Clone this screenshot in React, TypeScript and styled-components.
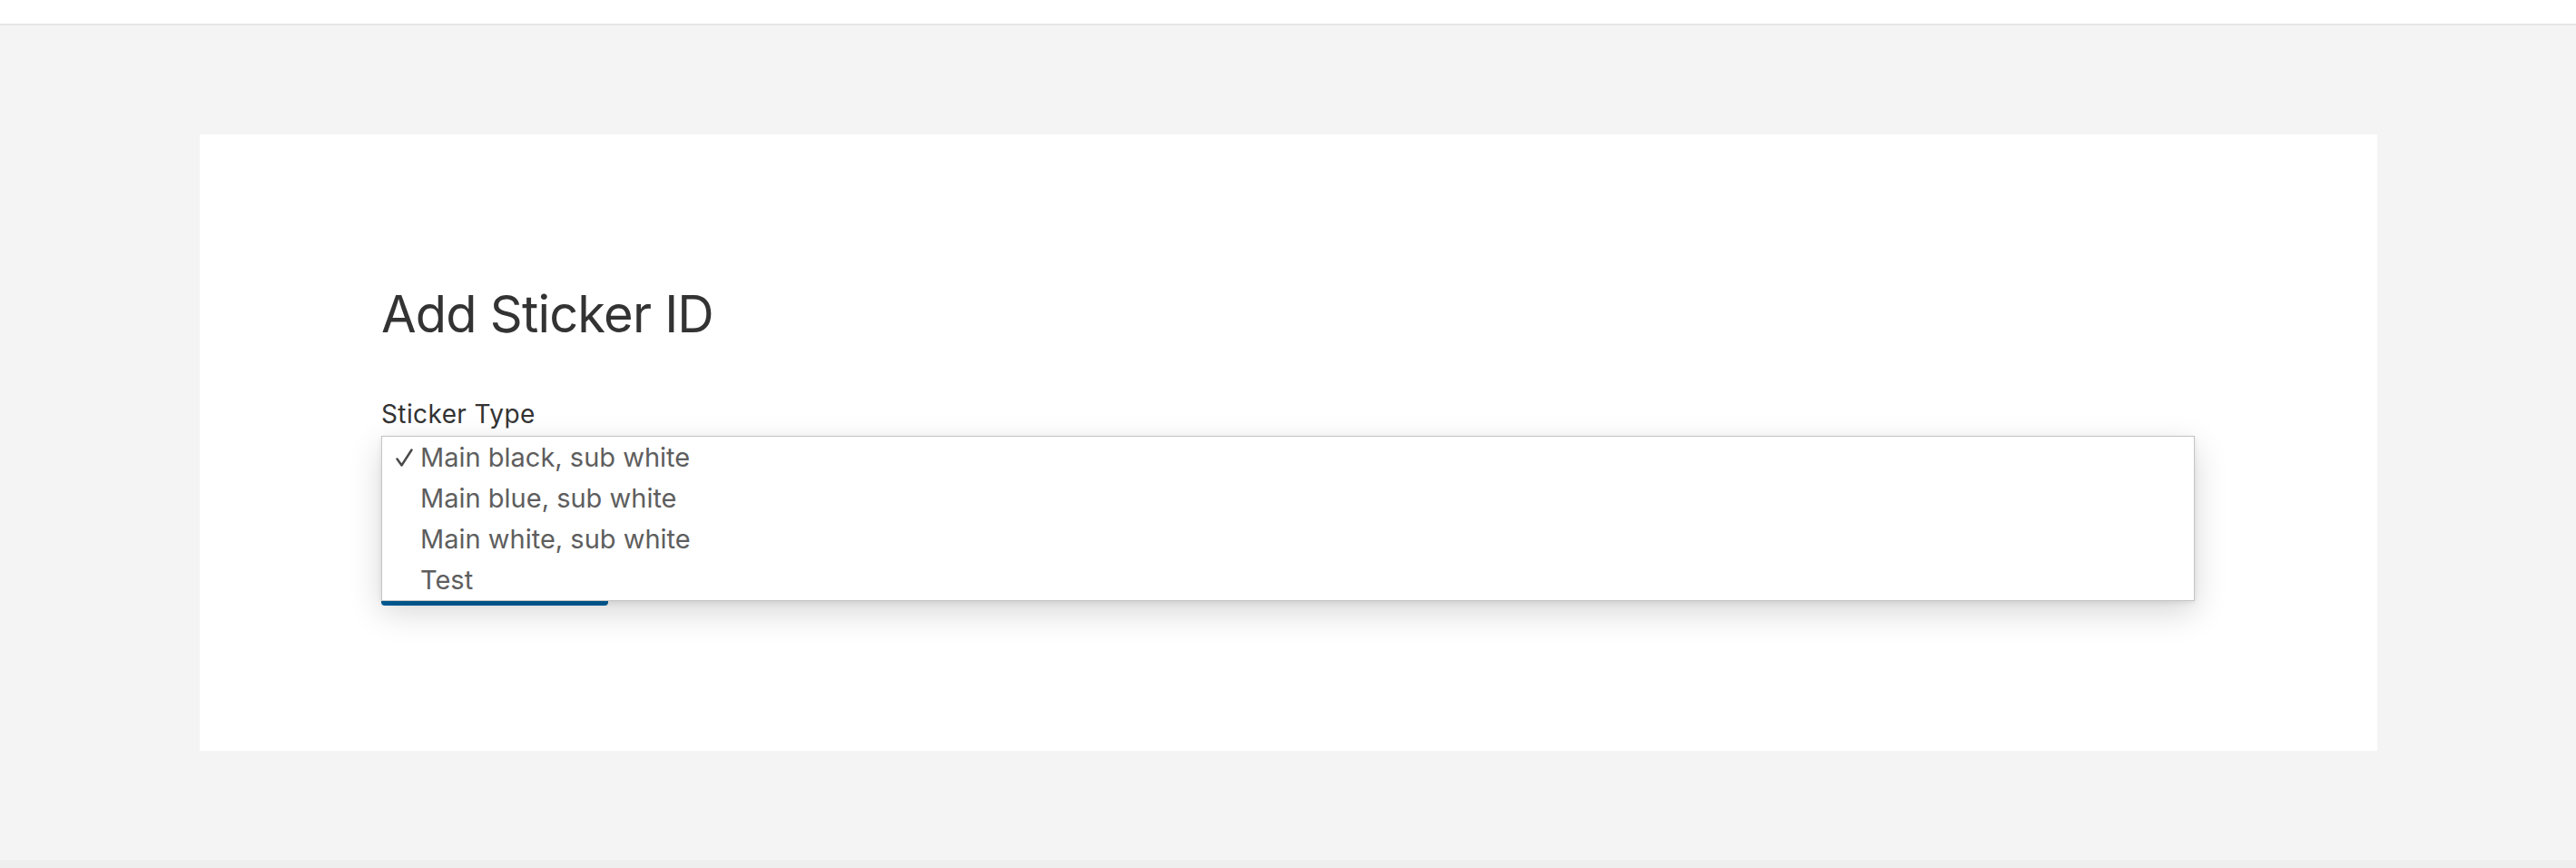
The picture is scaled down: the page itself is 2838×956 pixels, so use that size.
import * as React from 'react'
import styled, { createGlobalStyle } from 'styled-components'

const GlobalStyle = createGlobalStyle`
  html, body {
    margin: 0;
    padding: 0;
    background: #f4f4f4;
  }
  body {
    font-family: Inter, "Liberation Sans", Arial, sans-serif;
    color: #333333;
  }
`

const stickerTypes = [
  'Main black, sub white',
  'Main blue, sub white',
  'Main white, sub white',
  'Test'
]

const Page = styled.div`
  display: flex;
  flex-direction: column;
  height: 956px;
`

const TopBar = styled.header`
  height: 26px;
  flex-shrink: 0;
  background: #ffffff;
  border-bottom: 2px solid #e6e6e6;
`

const Main = styled.main`
  flex: 1;
  padding: 120px 219px 0 220px;
  background: #f4f4f4;
`

const Footer = styled.footer`
  height: 9px;
  flex-shrink: 0;
  background: #eeeeee;
`

const Card = styled.section`
  background: #ffffff;
  padding: 160px 201px 160px 200px;
`

const Title = styled.h1`
  margin: 3px 0 0;
  font-size: 56px;
  line-height: 70px;
  font-weight: 400;
  color: #333333;
  letter-spacing: -0.8px;
`

const Field = styled.div`
  position: relative;
  margin-top: 59px;
`

const Label = styled.label`
  display: block;
  font-size: 28px;
  line-height: 32px;
  letter-spacing: 0.4px;
  color: #333333;
`

const SelectBox = styled.div`
  margin-top: 8px;
  height: 46px;
  border: 1px solid #d0d0d0;
  border-radius: 4px;
  box-sizing: border-box;
`

const SubmitButton = styled.button`
  display: block;
  margin-top: 86px;
  width: 250px;
  height: 55px;
  border: 0;
  border-radius: 4px;
  background: #00629f;
  color: #ffffff;
  font-family: inherit;
  font-size: 26px;
`

const Menu = styled.ul`
  position: absolute;
  top: 40px;
  left: 0;
  right: 0;
  margin: 0;
  padding: 0;
  list-style: none;
  background: #ffffff;
  border: 1px solid #c4c4c4;
  box-shadow: 0 12px 34px rgba(0, 0, 0, 0.16), 0 2px 6px rgba(0, 0, 0, 0.08);
  box-sizing: border-box;
`

const Option = styled.li`
  position: relative;
  height: 45px;
  line-height: 45px;
  padding-left: 42px;
  font-size: 29px;
  color: #5e5e5e;
`

const Check = styled.svg`
  position: absolute;
  left: 15px;
  top: 13px;
  width: 19px;
  height: 20px;
`

export default function App() {
  const selected = 0
  return (
    <>
      <GlobalStyle />
      <Page>
        <TopBar />
        <Main>
          <Card>
            <Title>Add Sticker ID</Title>
            <Field>
              <Label>Sticker Type</Label>
              <SelectBox />
              <SubmitButton>Add</SubmitButton>
              <Menu>
                {stickerTypes.map((name, i) => (
                  <Option key={name}>
                    {i === selected && (
                      <Check viewBox="0 0 19 20">
                        <path
                          d="M1.5 11.5 L6.5 18.5 L17.5 1.5"
                          fill="none"
                          stroke="#4a4a4a"
                          strokeWidth="2.5"
                          strokeLinecap="round"
                          strokeLinejoin="round"
                        />
                      </Check>
                    )}
                    {name}
                  </Option>
                ))}
              </Menu>
            </Field>
          </Card>
        </Main>
        <Footer />
      </Page>
    </>
  )
}
